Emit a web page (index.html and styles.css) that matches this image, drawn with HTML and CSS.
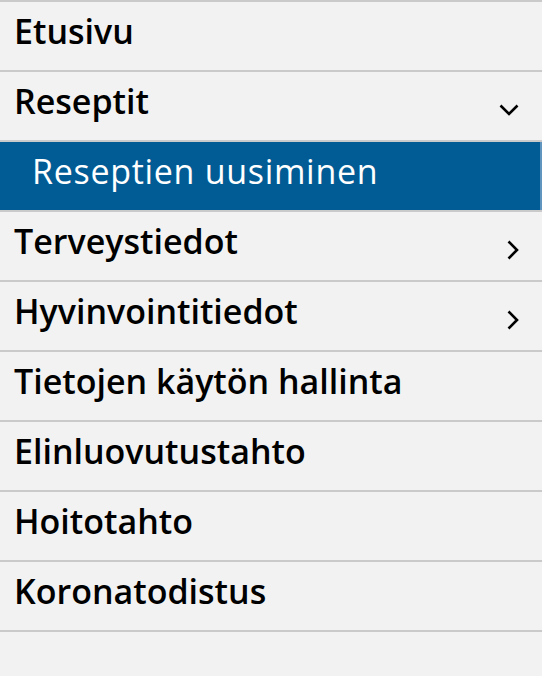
FILE: index.html
```html
<!DOCTYPE html>
<html lang="fi">
<head>
<meta charset="utf-8">
<title>Valikko</title>
<link rel="stylesheet" href="styles.css">
</head>
<body>
<nav class="menu">
  <ul class="menu-list">
    <li class="menu-item"><a class="menu-link" href="#">Etusivu</a></li>
    <li class="menu-item"><a class="menu-link" href="#">Reseptit<svg class="chev chev-down" viewBox="0 0 20 12" width="20" height="12"><path d="M1.5 1.5 L10 10 L18.5 1.5" fill="none" stroke="#000" stroke-width="2.6"/></svg></a></li>
    <li class="menu-item sub active"><a class="menu-link" href="#">Reseptien uusiminen</a></li>
    <li class="menu-item"><a class="menu-link" href="#">Terveystiedot<svg class="chev chev-right" viewBox="0 0 12 20" width="12" height="20"><path d="M1.5 1.5 L10 10 L1.5 18.5" fill="none" stroke="#000" stroke-width="2.6"/></svg></a></li>
    <li class="menu-item"><a class="menu-link" href="#">Hyvinvointitiedot<svg class="chev chev-right" viewBox="0 0 12 20" width="12" height="20"><path d="M1.5 1.5 L10 10 L1.5 18.5" fill="none" stroke="#000" stroke-width="2.6"/></svg></a></li>
    <li class="menu-item"><a class="menu-link" href="#">Tietojen käytön hallinta</a></li>
    <li class="menu-item"><a class="menu-link" href="#">Elinluovutustahto</a></li>
    <li class="menu-item"><a class="menu-link" href="#">Hoitotahto</a></li>
    <li class="menu-item"><a class="menu-link" href="#">Koronatodistus</a></li>
  </ul>
</nav>
</body>
</html>
```
FILE: styles.css
```css
html, body {
  margin: 0;
  padding: 0;
  background: #f2f2f2;
}
body {
  font-family: "Open Sans", "Liberation Sans", sans-serif;
  width: 542px;
  height: 676px;
  overflow: hidden;
}
.menu-list {
  list-style: none;
  margin: 0;
  padding: 0;
  border-top: 2px solid #cacaca;
}
.menu-item {
  border-bottom: 2px solid #cacaca;
}
.menu-link {
  display: flex;
  align-items: center;
  justify-content: space-between;
  height: 68px;
  padding: 0 22px 10px 14px;
  box-sizing: border-box;
  color: #000;
  text-decoration: none;
  font-size: 34px;
  font-weight: 600;
  line-height: 1;
  font-variant-ligatures: none;
}
.menu-item.active {
  background: #015c96;
  box-shadow: inset -2px 0 0 #5f95bf;
}
.menu-item.active .menu-link {
  color: #fff;
  font-weight: 400;
  letter-spacing: 0.7px;
  padding-left: 32px;
}
.chev-down {
  margin-right: 1px;
  margin-top: 18px;
}
.chev-right {
  margin-right: 1px;
  margin-top: 18px;
}
```
